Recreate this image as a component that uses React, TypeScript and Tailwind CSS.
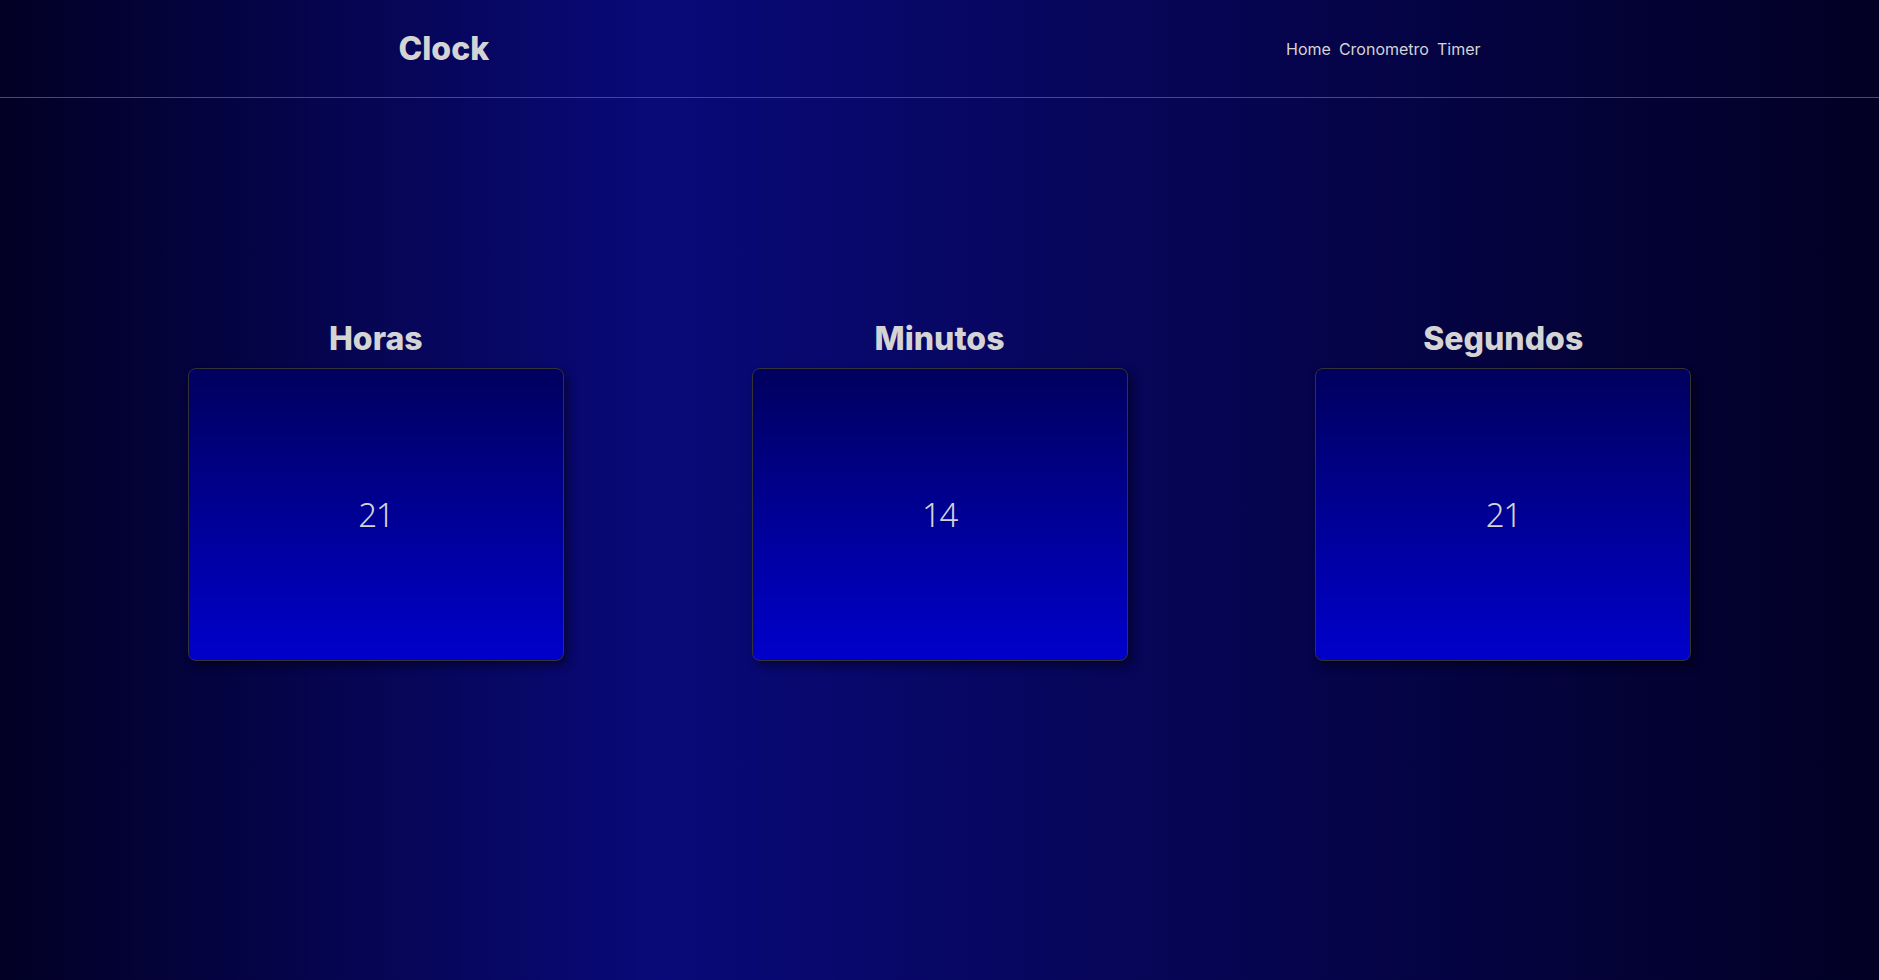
const units = [
  { label: 'Horas', value: '21' },
  { label: 'Minutos', value: '14' },
  { label: 'Segundos', value: '21' },
];

export default function App() {
  return (
    <div className="min-h-screen w-full bg-[linear-gradient(90deg,#020024_0%,#090979_35%,#020024_100%)] font-['Inter',sans-serif] text-[#d4d4d4]">
      <header className="flex h-[98px] items-center justify-around border-b border-[#4a4a6a]">
        <h1 className="text-[32px] font-extrabold">Clock</h1>
        <nav className="flex gap-2 text-base">
          <a href="#">Home</a>
          <a href="#">Cronometro</a>
          <a href="#">Timer</a>
        </nav>
      </header>

      <main className="flex justify-evenly pt-[221px]">
        {units.map((unit) => (
          <div key={unit.label} className="flex flex-col items-center">
            <h2 className="mb-[9px] text-[32px] leading-[40px] font-extrabold">{unit.label}</h2>
            <div className="flex h-[293px] w-[376px] items-center justify-center rounded-lg border border-[#333] bg-[linear-gradient(180deg,#00005e_0%,#0000cc_100%)] shadow-[4px_5px_10px_rgba(0,0,0,0.45)]">
              <span className="font-['Noto_Sans',sans-serif] text-[33px] font-[350] tracking-[-0.04em]">{unit.value}</span>
            </div>
          </div>
        ))}
      </main>
    </div>
  );
}
